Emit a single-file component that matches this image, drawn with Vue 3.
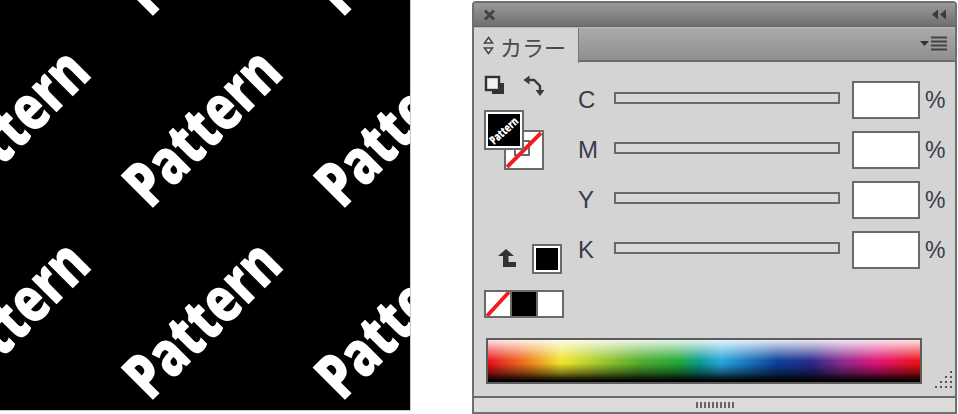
<template>
  <div class="page">
    <div class="canvas">
      <div class="tiles">
        <div class="tile" v-for="n in 9" :key="n"><span class="word">Pattern</span></div>
      </div>
    </div>

    <div class="panel">
      <div class="titlebar">
        <svg class="close" width="13" height="12" viewBox="0 0 13 12">
          <path d="M2 1.500l9 9M11 1.500l-9 9" stroke="#444" stroke-width="3" fill="none" />
        </svg>
        <svg class="collapse" width="16" height="11" viewBox="0 0 16 11">
          <path d="M7 0.5v10L1 5.5zM15 0.5v10L9 5.5z" fill="#3a3a3a" />
        </svg>
      </div>

      <div class="tabstrip">
        <div class="tab">
          <svg width="11" height="19" viewBox="0 0 11 19">
            <path d="M5.500 1.500L9.500 7H1.500zM5.500 17.500L1.500 12H9.500z" fill="#e8e8e8" stroke="#444" stroke-width="1.6" />
          </svg>
          <span>カラー</span>
        </div>
        <svg class="menu" width="30" height="16" viewBox="0 0 30 16">
          <path d="M1 5h9L5.500 10z" fill="#333" />
          <path d="M12 1.500h16M12 5.500h16M12 9.500h16M12 13.500h16" stroke="#444" stroke-width="1.8" />
        </svg>
      </div>

      <div class="body">
        <div class="main">
          <div class="tools">
            <div class="toolrow">
              <svg width="22" height="20" viewBox="0 0 22 20">
                <rect x="8" y="8" width="12" height="11" fill="#333" />
                <rect x="2" y="2" width="13" height="13" fill="#f2f2f2" stroke="#333" stroke-width="2.4" />
              </svg>
              <svg width="22" height="22" viewBox="0 0 22 22">
                <path d="M5 5h6l6 6v6" fill="none" stroke="#3a3a3a" stroke-width="2.4" />
                <path d="M6.500 0.500v9L0.500 5zM12.500 15h9L17 21z" fill="#3a3a3a" />
              </svg>
            </div>

            <div class="stack">
              <div class="stroke-box">
                <div class="stroke-hole"></div>
                <svg class="slash" viewBox="0 0 36 36" preserveAspectRatio="none">
                  <path d="M1 35L35 1" stroke="#f01c24" stroke-width="4" />
                </svg>
              </div>
              <div class="fill-box"><span class="tiny">Pattern</span></div>
            </div>

            <div class="current">
              <svg width="20" height="20" viewBox="0 0 20 20">
                <path d="M9 0L17 7H11.500V13H19V18H6V7H1z" fill="#333" />
              </svg>
              <div class="current-box"></div>
            </div>

            <div class="trio">
              <div class="cell none">
                <svg class="slash" viewBox="0 0 26 24" preserveAspectRatio="none">
                  <path d="M1 24L25 0" stroke="#f01c24" stroke-width="4" />
                </svg>
              </div>
              <div class="cell black"></div>
              <div class="cell white"></div>
            </div>
          </div>

          <div class="rows">
            <div class="row" v-for="c in channels" :key="c">
              <span class="label">{{ c }}</span>
              <div class="track"></div>
              <div class="value"></div>
              <span class="pct">%</span>
            </div>
          </div>
        </div>

        <div class="spectrum-row">
          <div class="spectrum"></div>
          <svg class="grip" width="20" height="20" viewBox="0 0 20 20">
            <g fill="#555">
              <rect v-for="d in gripDots" :key="d[0] + '-' + d[1]" :x="d[0]" :y="d[1]" width="2" height="2" />
            </g>
          </svg>
        </div>
      </div>

      <div class="footer">
        <div class="handle">
          <i v-for="n in 10" :key="n"></i>
        </div>
      </div>
    </div>
  </div>
</template>

<script setup>
const channels = ['C', 'M', 'Y', 'K']

// resize grip, triangle of dots
const gripDots = []
for (let y = 0; y < 4; y++) {
  for (let x = 3 - y; x < 4; x++) {
    gripDots.push([x * 5 + 1, y * 5 + 1])
  }
}
</script>

<style>
html, body { margin: 0; background: #fff; }
</style>

<style scoped>
.page {
  width: 958px; height: 414px; overflow: hidden;
  display: flex; align-items: flex-start; gap: 61px;
  background: #fff;
  font-family: "Liberation Sans", "Noto Sans CJK JP", sans-serif;
}

/* pattern */
.canvas {
  width: 410px; height: 410px; flex-shrink: 0; overflow: hidden;
  background: #000;
  border-right: 1px solid #c8c8c8; border-bottom: 1px solid #c8c8c8;
}
.tiles {
  display: grid; grid-template-columns: repeat(3, 192px); grid-auto-rows: 192px;
  margin: -162px 0 0 -87px;
  width: 576px;
}
.tile { display: flex; align-items: center; justify-content: center; }
.word {
  font-family: "Open Sans", sans-serif; font-weight: 800; font-size: 64px; line-height: 1;
  color: #fff; transform: rotate(-45deg) scaleX(0.76); flex-shrink: 0;
}

/* panel */
.panel {
  width: 485px; height: 413px; flex-shrink: 0; box-sizing: border-box;
  border: 2px solid #6f6f6f; border-radius: 4px 4px 0 0;
  margin-top: 1px;
  display: flex; flex-direction: column;
  background: #d5d4d5;
}
.titlebar {
  height: 24px; flex-shrink: 0; box-sizing: border-box;
  display: flex; align-items: center; justify-content: space-between;
  padding: 0 8px 0 9px;
  background: linear-gradient(#9a9a9a, #6f6f6f);
  border-bottom: 1px solid #666;
}
.tabstrip {
  height: 35px; flex-shrink: 0; box-sizing: border-box;
  display: flex; justify-content: space-between; align-items: center;
  padding-right: 6px;
  background: linear-gradient(#aaa, #8f8f8f);
  border-top: 1px solid #b9b9b9;
  border-bottom: 2px solid #6c6c6c;
}
.tab {
  width: 105px; height: 35px; box-sizing: border-box; align-self: flex-start;
  display: flex; align-items: center; gap: 6px; padding-left: 9px;
  background: #d5d4d5;
  border-right: 1px solid #777;
  font-size: 22px; color: #4a4a4a; font-weight: 400;
  font-family: "Noto Sans CJK JP", sans-serif;
}
.body { flex: 1; display: flex; flex-direction: column; }
.main { display: flex; height: 276px; }

.tools { width: 104px; flex-shrink: 0; box-sizing: border-box; padding: 13px 0 0 10px; }
.toolrow { display: flex; gap: 17px; height: 35px; }
.stack { position: relative; width: 60px; height: 60px; }
.fill-box {
  position: absolute; left: 0; top: 0; width: 40px; height: 40px; box-sizing: border-box;
  border: 2px solid #6a6a6a; background: #000; outline: 2px solid #fff; outline-offset: -4px;
  overflow: hidden; display: flex; align-items: center; justify-content: center;
}
.tiny {
  font-family: "Open Sans", sans-serif; font-weight: 800; font-size: 12px; color: #fff;
  transform: rotate(-42deg) scaleX(0.72); flex-shrink: 0;
}
.stroke-box {
  position: absolute; left: 20px; top: 20px; width: 40px; height: 40px; box-sizing: border-box;
  border: 2px solid #6a6a6a; background: #fff;
}
.stroke-hole {
  position: absolute; left: 8px; top: 8px; width: 16px; height: 16px; box-sizing: border-box;
  border: 2px solid #6a6a6a; background: #fff;
}
.slash { position: absolute; left: 0; top: 0; width: 100%; height: 100%; }
.current { display: flex; align-items: center; gap: 15px; margin: 74px 0 0 13px; height: 30px; }
.current-box {
  width: 30px; height: 30px; box-sizing: border-box;
  border: 2px solid #6a6a6a; background: #000; outline: 2px solid #fff; outline-offset: -4px;
}
.trio {
  display: flex; width: 80px; height: 28px; box-sizing: border-box; margin-top: 16px;
  border: 2px solid #6a6a6a;
}
.cell { flex: 1; position: relative; }
.cell.none { background: #fff; border-right: 2px solid #6a6a6a; }
.cell.black { background: #000; }
.cell.white { background: #fff; border-left: 2px solid #6a6a6a; }

.rows { flex: 1; display: flex; flex-direction: column; gap: 12px; padding-top: 19px; }
.row { display: flex; align-items: center; height: 38px; }
.label { width: 36px; font-size: 24px; color: #3a3a4a; flex-shrink: 0; }
.track {
  width: 226px; height: 12px; box-sizing: border-box; flex-shrink: 0;
  border: 2px solid #6a6a6a; background: #d8d8d8; margin-top: -4px;
}
.value {
  width: 68px; height: 38px; box-sizing: border-box; flex-shrink: 0; margin-left: 12px;
  border: 2px solid #6a6a6a; background: #fff;
}
.pct { margin-left: 5px; font-size: 23px; color: #3a3a4a; }

.spectrum-row { display: flex; align-items: flex-end; padding-left: 12px; }
.spectrum {
  width: 436px; height: 46px; box-sizing: border-box; flex-shrink: 0;
  border: 2px solid #5c5c5c;
  background:
    linear-gradient(rgba(255,255,255,0.88), rgba(255,255,255,0) 50%, rgba(0,0,0,0) 55%, rgba(0,0,0,0.45) 78%, rgba(0,0,0,0.8) 90%, #000 98%),
    linear-gradient(90deg, #e8101c 0, #ee7a1c 9%, #f2e62c 17%, #52ad2c 35%, #22a838 44%, #0a9a92 49%, #25a6de 54%, #0c3f9a 67%, #2a2a8a 75%, #8c2a90 82%, #e01478 90%, #ee1010 100%);
}
.grip { margin-left: 12px; margin-bottom: -6px; }

.footer {
  height: 16px; flex-shrink: 0; box-sizing: border-box; margin-top: auto;
  background: #dcdcdc; border-top: 2px solid #6a6a6a;
  display: flex; align-items: center; justify-content: center;
}
.handle { display: flex; gap: 2px; }
.handle i { display: block; width: 2px; height: 6px; background: #666; }
</style>
